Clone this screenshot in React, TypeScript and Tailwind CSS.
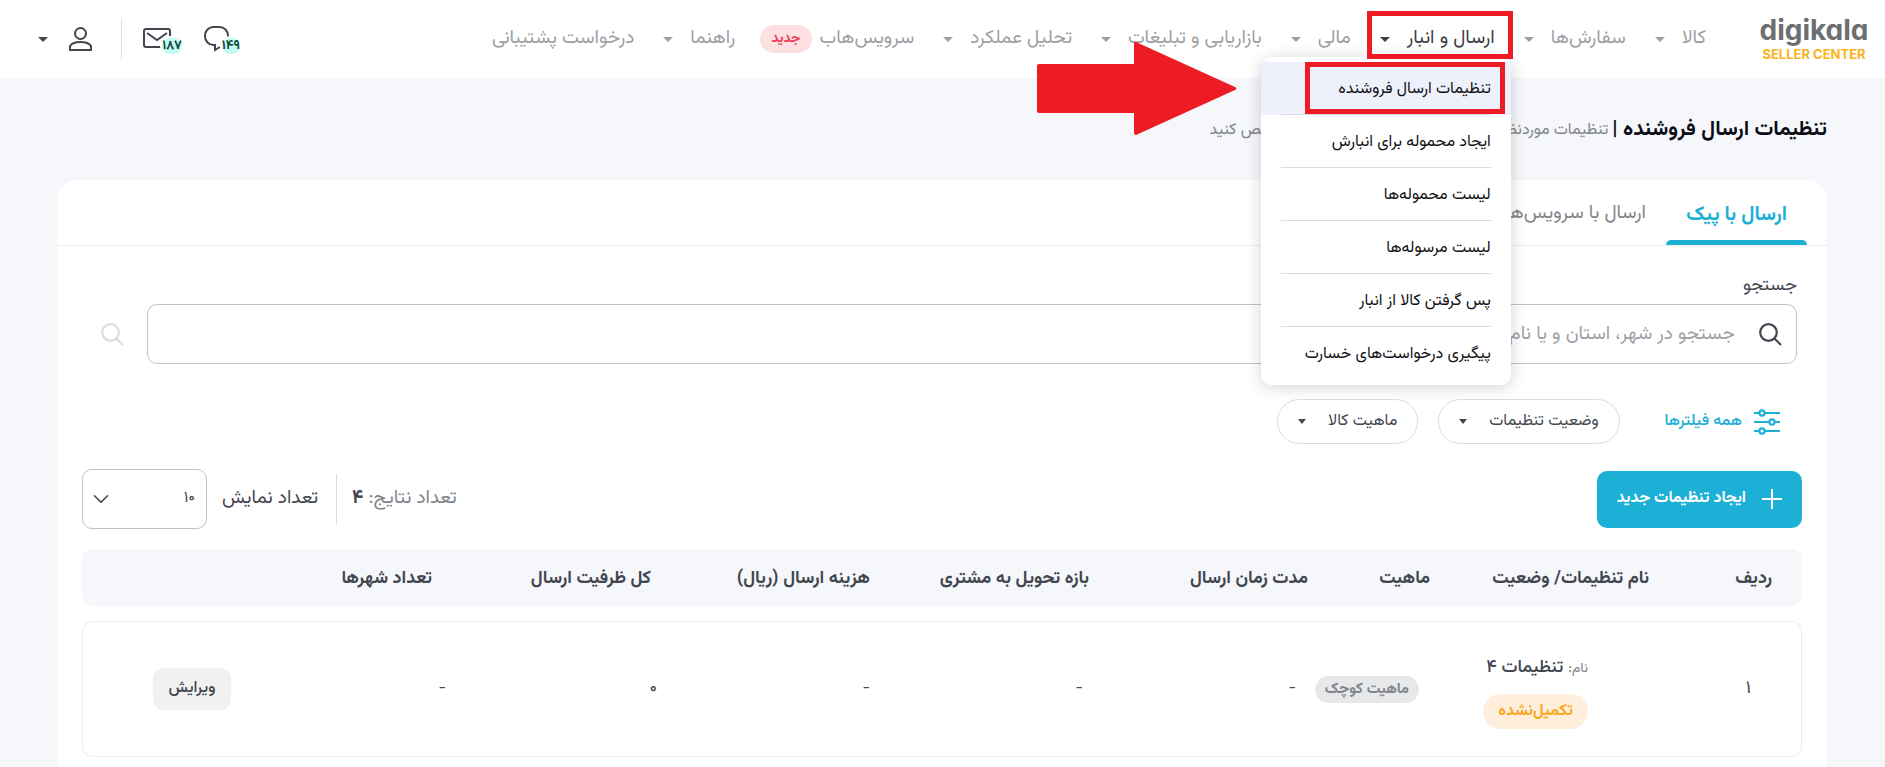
import { ReactNode } from "react";
import { ChevronDown } from "lucide-react";

type NavItem = {
  label: string;
  caret?: boolean;
  badge?: string;
  active?: boolean;
};

const navItems: NavItem[] = [
  { label: "کالا", caret: true },
  { label: "سفارش‌ها", caret: true },
  { label: "ارسال و انبار", caret: true, active: true },
  { label: "مالی", caret: true },
  { label: "بازاریابی و تبلیغات", caret: true },
  { label: "تحلیل عملکرد", caret: true },
  { label: "سرویس‌هاب", badge: "جدید" },
  { label: "راهنما", caret: true },
  { label: "درخواست پشتیبانی" },
];

const shippingMenu = [
  "تنظیمات ارسال فروشنده",
  "ایجاد محموله برای انبارش",
  "لیست محموله‌ها",
  "لیست مرسوله‌ها",
  "پس گرفتن کالا از انبار",
  "پیگیری درخواست‌های خسارت",
];

const columns = [
  { title: "ردیف", width: "w-[123px]" },
  { title: "نام تنظیمات/ وضعیت", width: "w-[219px]" },
  { title: "ماهیت", width: "w-[122px]" },
  { title: "مدت زمان ارسال", width: "w-[219px]" },
  { title: "بازه تحویل به مشتری", width: "w-[219px]" },
  { title: "هزینه ارسال (ریال)", width: "w-[219px]" },
  { title: "کل ظرفیت ارسال", width: "w-[219px]" },
  { title: "تعداد شهرها", width: "w-[219px]" },
  { title: "", width: "w-auto" },
];

function Caret() {
  return (
    <svg width="10" height="5" viewBox="0 0 10 5" fill="currentColor">
      <path d="M0 0h10L5 5z" />
    </svg>
  );
}

function SearchIcon() {
  return (
    <svg
      width="23"
      height="23"
      viewBox="0 0 23 23"
      fill="none"
      stroke="currentColor"
      strokeWidth="2.200"
    >
      <circle cx="9.500" cy="9.500" r="8.300" />
      <path d="m15.500 15.500 6.500 6.500" />
    </svg>
  );
}

function Logo() {
  return (
    <a
      href="#"
      dir="ltr"
      className="flex w-[106px] flex-col items-center gap-0.5 whitespace-nowrap font-[Inter,sans-serif]"
    >
      <span className="text-[28px] leading-7 font-bold text-[#6d6e71] [font-feature-settings:'cv11']">
        digikala
      </span>
      <span className="text-[13px] leading-4 font-bold text-[#fbb31c]">
        SELLER CENTER
      </span>
    </a>
  );
}

function ShippingMenu() {
  return (
    <div className="absolute top-[30px] -right-4 z-10 w-[250px] rounded-[10px] bg-white py-[5px] shadow-[0_2px_16px_rgba(0,0,0,0.18)]">
      <ul>
        {shippingMenu.map((item, i) => (
          <li
            key={item}
            className={i === 0 ? "relative bg-[#eef0fc] px-5" : "px-5"}
          >
            <a
              href="#"
              className={`flex h-[53px] items-center pt-[3px] text-base whitespace-nowrap text-[#101114] ${
                i < shippingMenu.length - 1 ? "border-b border-[#dcdcdc]" : ""
              }`}
            >
              {item}
            </a>
            {i === 0 && (
              <span className="pointer-events-none absolute top-0 right-[6px] h-[52px] w-[200px] border-5 border-[#ed1c24]" />
            )}
          </li>
        ))}
      </ul>
      <svg
        className="pointer-events-none absolute -top-[15px] right-[274px]"
        width="200"
        height="93"
        viewBox="0 0 200 93"
        fill="#ed1c24"
      >
        <path d="M2 22h95V1q0-2 2-1l99 45q3 1.500 0 3L99 93q-2 0-2-2V71H2q-2 0-2-2V24q0-2 2-2z" />
      </svg>
    </div>
  );
}

function IconBadge({ count, children }: { count: string; children: ReactNode }) {
  return (
    <button className="relative text-[#42464f]">
      {children}
      <span className="absolute -right-[11px] -bottom-[2px] h-4 rounded-lg bg-[#c3fdf1] text-[13px] leading-4 font-bold text-[#10443c] ring-2 ring-white">
        {count}
      </span>
    </button>
  );
}

function Header() {
  return (
    <header className="flex h-[78px] items-center bg-white pr-[18px] pl-[38px]">
      <Logo />
      <nav className="mr-[55px] flex items-center gap-[29px] text-[19px] text-[#9d9fa5]">
        {navItems.map((item) => (
          <div key={item.label} className={item.badge ? "-ml-1" : "relative"}>
            <a
              href="#"
              className={`flex h-6 items-center whitespace-nowrap ${
                item.badge ? "gap-2" : "gap-[17px]"
              } ${item.active ? "text-[#3b3e46]" : ""}`}
            >
              {item.label}
              {item.caret && <Caret />}
              {item.badge && (
                <span className="rounded-full bg-[#fce0e2] px-[11px] py-1 text-sm leading-5 font-bold text-[#ee4056]">
                  {item.badge}
                </span>
              )}
            </a>
            {item.active && (
              <>
                <span className="pointer-events-none absolute -top-4 -right-[18px] -left-[13px] z-20 h-12 border-5 border-[#ed1c24]" />
                <ShippingMenu />
              </>
            )}
          </div>
        ))}
      </nav>
      <div className="mr-auto flex items-center">
        <IconBadge count="۱۴۹">
          <svg width="25" height="26" viewBox="0 0 25 26" fill="none" stroke="currentColor" strokeWidth="2">
            <path d="M24 11V9.500A8.500 8.500 0 0 0 15.500 1h-6A8.500 8.500 0 0 0 1 9.500v1A8.500 8.500 0 0 0 9.500 19H11v5l5-3" />
          </svg>
        </IconBadge>
        <div className="mr-[33px] flex">
          <IconBadge count="۱۸۷">
            <svg width="28" height="26" viewBox="0 0 28 26" fill="none" stroke="currentColor" strokeWidth="2">
              <rect x="1" y="3" width="26" height="18" rx="2" />
              <path d="m4 7 10 7 10-7" />
            </svg>
          </IconBadge>
        </div>
        <span className="mr-[21px] h-10 w-px bg-[#dcdcdc]" />
        <button className="mr-[29px] flex items-center gap-[21px] text-[#42464f]">
          <svg width="23" height="24" viewBox="0 0 23 24" fill="none" stroke="currentColor" strokeWidth="2">
            <circle cx="11.500" cy="6.500" r="5.500" />
            <path d="M1 23v-4c2-3 6-4 10.500-4S20 16 22 19v4z" />
          </svg>
          <Caret />
        </button>
      </div>
    </header>
  );
}

function FilterPill({ label }: { label: string }) {
  return (
    <button className="flex h-[45px] items-center gap-[22px] rounded-full border border-[#dcdcdc] px-5 text-base whitespace-nowrap text-[#42464f]">
      {label}
      <svg width="8" height="5" viewBox="0 0 8 5" fill="currentColor">
        <path d="M0 0h8L4 5z" />
      </svg>
    </button>
  );
}

function FilterIcon() {
  return (
    <svg width="26" height="26" viewBox="0 0 26 26" fill="none" stroke="currentColor" strokeWidth="2.200">
      <path d="M0 4h5M11 4h15M0 13h15M21 13h5M0 22h5M11 22h15" />
      <circle cx="8" cy="4" r="2.600" />
      <circle cx="18" cy="13" r="2.600" />
      <circle cx="8" cy="22" r="2.600" />
    </svg>
  );
}

function SettingsTable() {
  const cell = "border-y border-[#ececec] p-0";

  return (
    <table className="w-full table-fixed border-separate border-spacing-0 text-right whitespace-nowrap text-[#42464f]">
      <thead>
        <tr className="h-[57px] text-lg">
          {columns.map((col, i) => (
            <th
              key={i}
              className={`${col.width} bg-[#f5f7fb] p-0 pt-[2px] pr-[30px] font-bold first:rounded-r-[10px] last:rounded-l-[10px]`}
            >
              {col.title}
            </th>
          ))}
        </tr>
      </thead>
      <tbody>
        <tr aria-hidden="true">
          <td colSpan={9} className="h-[15px] p-0" />
        </tr>
        <tr className="h-[136px]">
          <td className={`${cell} rounded-r-[10px] border-r pr-[50px] text-lg`}>۱</td>
          <td className={`${cell} pr-[91px]`}>
            <div className="mt-1 mb-3 text-lg leading-7">
              <span className="text-sm text-[#81858b]">نام:</span>{" "}
              <span className="font-medium">تنظیمات ۴</span>
            </div>
            <span className="inline-block rounded-full bg-[#feeedb] px-[15px] text-base leading-[35px] font-bold text-[#f9a825]">
              تکمیل‌نشده
            </span>
          </td>
          <td className={`${cell} pr-[41px]`}>
            <span className="inline-block rounded-full bg-[#e6e8ea] px-[10px] text-[15px] leading-[27px] font-bold text-[#81858b]">
              ماهیت کوچک
            </span>
          </td>
          <td className={`${cell} pr-[42px]`}>-</td>
          <td className={`${cell} pr-9`}>-</td>
          <td className={`${cell} pr-[30px]`}>-</td>
          <td className={`${cell} pr-6 text-lg`}>۰</td>
          <td className={`${cell} pr-4`}>-</td>
          <td className={`${cell} rounded-l-[10px] border-l pr-3`}>
            <button className="h-[42px] w-[78px] rounded-[10px] bg-[#f1f1f1] text-base font-medium">
              ویرایش
            </button>
          </td>
        </tr>
      </tbody>
    </table>
  );
}

export default function App() {
  return (
    <div
      dir="rtl"
      className="h-screen overflow-hidden bg-[#f5f7fb] font-['Vazirmatn','Noto_Sans_Arabic','DejaVu_Sans',sans-serif]"
    >
      <Header />

      <main className="pr-[58px] pl-[57px]">
        <div className="flex h-[102px] items-center gap-1 pt-[2px] whitespace-nowrap">
          <h1 className="text-[21px] font-bold text-[#0c0c16]">
            تنظیمات ارسال فروشنده |
          </h1>
          <p className="pt-[2px] text-base text-[#81858b]">
            تنظیمات موردنظر خود را برای ارسال کالا به مشتری مشخص کنید
          </p>
        </div>

        <section className="rounded-t-[20px] bg-white pb-8">
          {/* Tabs */}
          <div className="flex h-[66px] border-b border-[#ececec] pr-5 text-[19px] whitespace-nowrap">
            <button className="relative w-[141px] pt-1 text-xl font-bold text-[#1cb0d6]">
              ارسال با پیک
              <span className="absolute inset-x-0 bottom-0 h-[5px] rounded-t-md bg-[#1cb0d6]" />
            </button>
            <button className="px-5 pt-1 text-[#81858b]">
              ارسال با سرویس‌های دیجی‌کالا
            </button>
          </div>

          {/* Search */}
          <div className="px-[30px] pt-7">
            <label htmlFor="search" className="block text-lg leading-6 text-[#42464f]">
              جستجو
            </label>
            <div className="mt-[6px] flex items-center">
              <div className="flex h-[60px] flex-1 items-center gap-6 rounded-[10px] border border-[#c0c2c5] px-[14px]">
                <span className="text-[#42464f]">
                  <SearchIcon />
                </span>
                <input
                  id="search"
                  type="text"
                  placeholder="جستجو در شهر، استان و یا نام تنظیمات"
                  className="h-full flex-1 text-[19px] outline-none placeholder:text-[#9d9fa5]"
                />
              </div>
              <button aria-label="جستجو" className="mr-[23px] ml-[14px] text-[#dcdcdc]">
                <SearchIcon />
              </button>
            </div>
          </div>

          {/* Filters */}
          <div className="mt-[35px] flex items-center gap-5 pr-[47px]">
            <button className="ml-[25px] flex items-center gap-3 text-base font-medium text-[#1cb0d6]">
              <FilterIcon />
              همه فیلترها
            </button>
            <FilterPill label="وضعیت تنظیمات" />
            <FilterPill label="ماهیت کالا" />
          </div>

          <div className="px-[25px] pt-[25px]">
            <div className="mb-5 flex items-center justify-between">
              <button className="flex h-[57px] items-center gap-4 rounded-[10px] bg-[#1cb0d6] px-5 text-base font-bold text-white">
                <svg width="20" height="20" viewBox="0 0 20 20" stroke="currentColor" strokeWidth="2">
                  <path d="M10 0v20M0 10h20" />
                </svg>
                ایجاد تنظیمات جدید
              </button>
              <div className="flex items-center text-[19px] text-[#42464f]">
                <span className="text-[#81858b]">
                  تعداد نتایج: <b className="text-[#42464f]">۴</b>
                </span>
                <span className="mr-[15px] ml-[18px] h-[50px] w-px bg-[#dcdcdc]" />
                <label htmlFor="page-size">تعداد نمایش</label>
                <div className="relative mr-[15px]">
                  <select
                    id="page-size"
                    className="h-[60px] w-[125px] appearance-none rounded-[10px] border border-[#c0c2c5] bg-white px-[11px] text-base"
                  >
                    <option>۱۰</option>
                    <option>۲۰</option>
                    <option>۵۰</option>
                  </select>
                  <ChevronDown
                    size={26}
                    strokeWidth={1.5}
                    className="pointer-events-none absolute top-[17px] left-[6px]"
                  />
                </div>
              </div>
            </div>
            <SettingsTable />
          </div>
        </section>
      </main>
    </div>
  );
}
